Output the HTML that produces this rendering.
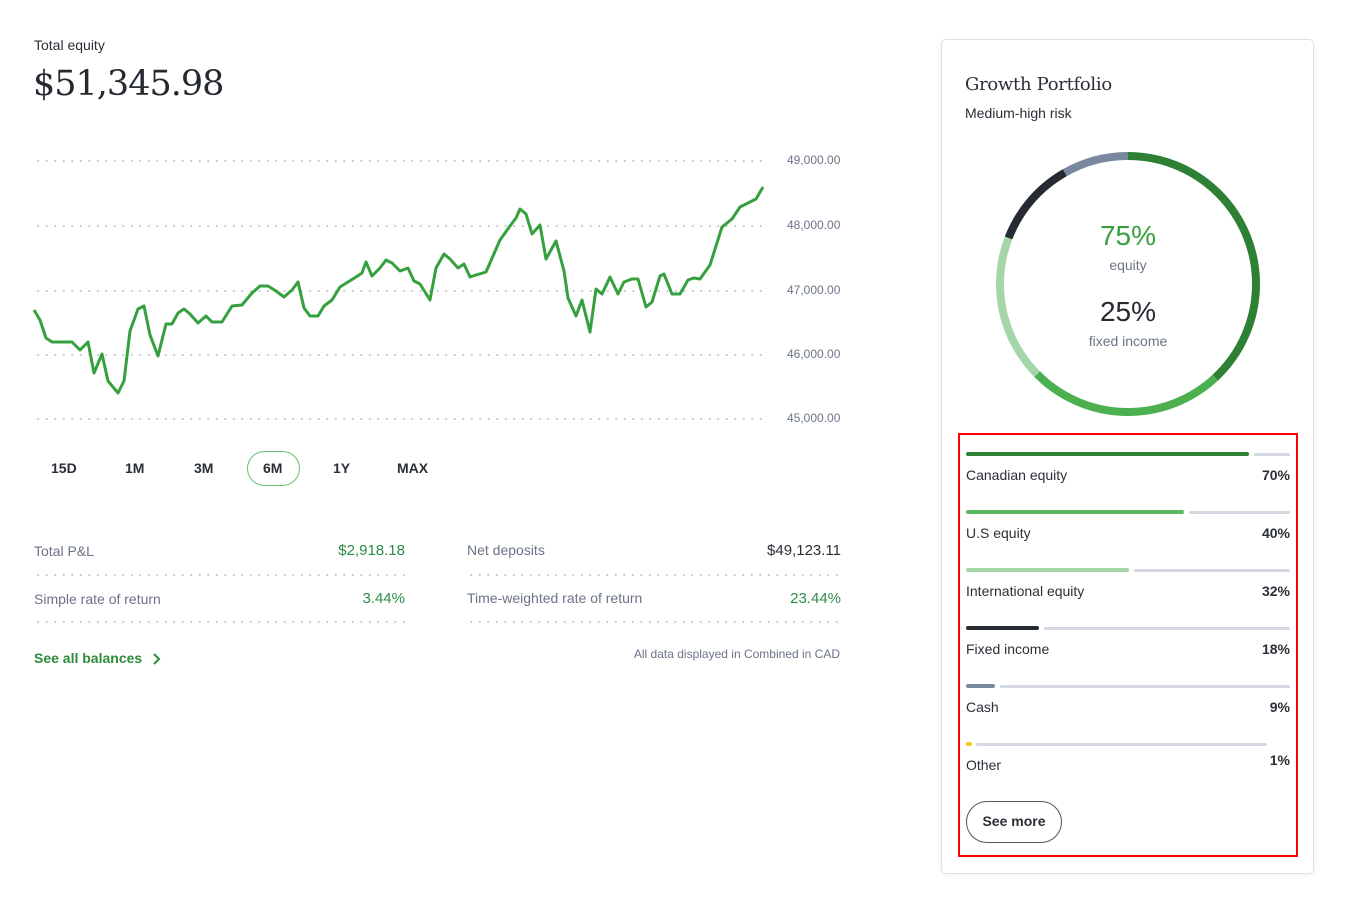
<!DOCTYPE html>
<html><head><meta charset="utf-8"><style>
*{margin:0;padding:0;box-sizing:border-box}
body{width:1356px;height:898px;background:#fff;position:relative;font-family:"Liberation Sans",sans-serif;color:#2a2f36;overflow:hidden}
.a{position:absolute;white-space:nowrap}
.lbl{font-size:14px;color:#6b7486}
.dots{position:absolute;height:2px;background-image:radial-gradient(circle,#c5cad6 0.9px,transparent 1.2px);background-size:8.5px 2px;background-repeat:repeat-x}
.ax{font-size:12px;color:#6b7486}
.tab{position:absolute;font-size:14px;font-weight:bold;color:#2a2f36;top:460px}
.bar{position:absolute;height:4px;border-radius:2px}
.g{background:#d3d8e2}
.bl{position:absolute;left:966px;font-size:14px;color:#2a2f36}
.bp{position:absolute;right:66px;font-size:14px;font-weight:bold;color:#2a2f36}
</style></head><body>
<div class="a" style="left:34px;top:37px;font-size:14px;color:#2a2f36">Total equity</div>
<div class="a" style="left:33px;top:64px;font-size:35px;font-family:'DejaVu Serif',serif;color:#252a31;letter-spacing:-1px">$51,345.98</div>

<div class="dots" style="left:34px;top:160px;width:732px"></div>
<div class="dots" style="left:34px;top:225px;width:732px"></div>
<div class="dots" style="left:34px;top:290px;width:732px"></div>
<div class="dots" style="left:34px;top:354px;width:732px"></div>
<div class="dots" style="left:34px;top:418px;width:732px"></div>
<div class="a ax" style="left:787px;top:153px">49,000.00</div>
<div class="a ax" style="left:787px;top:218px">48,000.00</div>
<div class="a ax" style="left:787px;top:283px">47,000.00</div>
<div class="a ax" style="left:787px;top:347px">46,000.00</div>
<div class="a ax" style="left:787px;top:411px">45,000.00</div>
<svg class="a" style="left:0;top:0" width="800" height="440"><polyline fill="none" stroke="#36a03f" stroke-width="3" stroke-linejoin="round" points="34,310 40,320 46,338 52,342 72,342 80,350 88,342 94,373 102,354 108,381 118,393 124,381 130,331 138,309 144,306 150,335 158,356 166,324 172,324 178,313 184,309 190,314 198,323 206,316 212,322 222,322 232,306 242,305 252,293 260,286 268,286 276,291 284,297 292,290 298,282 304,308 310,316 318,316 324,306 332,300 340,287 348,282 356,277 362,273 366,262 372,276 380,268 386,260 392,263 400,271 408,268 414,281 420,284 430,300 436,268 444,254 450,259 458,268 464,264 470,277 476,275 486,272 500,240 510,226 516,218 520,209 526,214 532,234 540,225 546,259 556,241 564,271 568,298 576,316 582,300 590,332 596,289 602,294 610,277 618,294 624,282 632,279 638,279 646,307 652,302 660,276 664,274 672,294 680,294 688,280 694,278 700,279 710,265 722,227 732,219 740,207 748,203 756,199 763,187"/></svg>

<div class="tab" style="left:51px">15D</div>
<div class="tab" style="left:125px">1M</div>
<div class="tab" style="left:194px">3M</div>
<div class="a" style="left:247px;top:451px;width:53px;height:35px;border:1.5px solid #6cc070;border-radius:18px"></div>
<div class="tab" style="left:263px">6M</div>
<div class="tab" style="left:333px">1Y</div>
<div class="tab" style="left:397px">MAX</div>

<div class="a lbl" style="left:34px;top:543px">Total P&amp;L</div>
<div class="a" style="right:951px;top:542px;font-size:15px;color:#2e8b4a">$2,918.18</div>
<div class="dots" style="left:34px;top:574px;width:372px"></div>
<div class="a lbl" style="left:34px;top:591px">Simple rate of return</div>
<div class="a" style="right:951px;top:590px;font-size:15px;color:#2e8b4a">3.44%</div>
<div class="dots" style="left:34px;top:621px;width:372px"></div>
<div class="a" style="left:34px;top:650px;font-size:14px;font-weight:bold;color:#2e8b3a">See all balances</div>
<svg class="a" style="left:152px;top:652px" width="10" height="14"><path d="M2 2l5 5-5 5" fill="none" stroke="#2e8b3a" stroke-width="2"/></svg>

<div class="a lbl" style="left:467px;top:542px">Net deposits</div>
<div class="a" style="right:515px;top:542px;font-size:15px;color:#2a2f36">$49,123.11</div>
<div class="dots" style="left:467px;top:574px;width:374px"></div>
<div class="a lbl" style="left:467px;top:590px">Time-weighted rate of return</div>
<div class="a" style="right:515px;top:590px;font-size:15px;color:#2e8b4a">23.44%</div>
<div class="dots" style="left:467px;top:621px;width:374px"></div>
<div class="a" style="right:516px;top:647px;font-size:12px;color:#6b7486">All data displayed in Combined in CAD</div>

<div class="a" style="left:941px;top:39px;width:373px;height:835px;border:1px solid #dde1e7;border-radius:5px;box-shadow:0 1px 4px rgba(0,0,0,0.08)"></div>
<div class="a" style="left:965px;top:74px;font-size:18px;font-family:'DejaVu Serif',serif;color:#2a2f36;letter-spacing:-0.3px">Growth Portfolio</div>
<div class="a" style="left:965px;top:105px;font-size:14px;color:#2a2f36">Medium-high risk</div>
<svg class="a" style="left:996px;top:152px" width="264" height="264" viewBox="0 0 264 264">
<g transform="rotate(-90 132 132)" fill="none" stroke-width="8">
<circle cx="132" cy="132" r="128" stroke="#2e8034" stroke-dasharray="306 1000" stroke-dashoffset="0"/>
<circle cx="132" cy="132" r="128" stroke="#4caf50" stroke-dasharray="197 1000" stroke-dashoffset="-306"/>
<circle cx="132" cy="132" r="128" stroke="#a5d6a7" stroke-dasharray="147 1000" stroke-dashoffset="-503"/>
<circle cx="132" cy="132" r="128" stroke="#262b32" stroke-dasharray="88 1000" stroke-dashoffset="-650"/>
<circle cx="132" cy="132" r="128" stroke="#7a889f" stroke-dasharray="66 1000" stroke-dashoffset="-738"/>
</g></svg>
<div class="a" style="left:1028px;width:200px;text-align:center;top:220px;font-size:28px;color:#36a03f">75%</div>
<div class="a" style="left:1028px;width:200px;text-align:center;top:257px;font-size:14px;color:#6b7486">equity</div>
<div class="a" style="left:1028px;width:200px;text-align:center;top:296px;font-size:28px;color:#252a31">25%</div>
<div class="a" style="left:1028px;width:200px;text-align:center;top:333px;font-size:14px;color:#6b7486">fixed income</div>

<div class="a" style="left:958px;top:433px;width:340px;height:424px;border:2px solid #f00"></div>
<div class="bar" style="left:966px;top:452px;width:283px;background:#2e8034"></div><div class="bar g" style="left:1254px;top:453px;width:36px;height:3px"></div>
<div class="bl" style="top:467px">Canadian equity</div><div class="bp" style="top:467px">70%</div>
<div class="bar" style="left:966px;top:510px;width:218px;background:#5cb860"></div><div class="bar g" style="left:1189px;top:511px;width:101px;height:3px"></div>
<div class="bl" style="top:525px">U.S equity</div><div class="bp" style="top:525px">40%</div>
<div class="bar" style="left:966px;top:568px;width:163px;background:#a5d6a7"></div><div class="bar g" style="left:1134px;top:569px;width:156px;height:3px"></div>
<div class="bl" style="top:583px">International equity</div><div class="bp" style="top:583px">32%</div>
<div class="bar" style="left:966px;top:626px;width:73px;background:#262b32"></div><div class="bar g" style="left:1044px;top:627px;width:246px;height:3px"></div>
<div class="bl" style="top:641px">Fixed income</div><div class="bp" style="top:641px">18%</div>
<div class="bar" style="left:966px;top:684px;width:29px;background:#7a889f"></div><div class="bar g" style="left:1000px;top:685px;width:290px;height:3px"></div>
<div class="bl" style="top:699px">Cash</div><div class="bp" style="top:699px">9%</div>
<div class="bar" style="left:966px;top:742px;width:6px;background:#f5c518"></div><div class="bar g" style="left:976px;top:743px;width:291px;height:3px"></div>
<div class="bl" style="top:757px">Other</div><div class="bp" style="top:752px">1%</div>
<div class="a" style="left:966px;top:801px;width:96px;height:42px;border:1.5px solid #555;border-radius:21px;font-size:14px;font-weight:bold;text-align:center;line-height:39px;color:#2a2f36">See more</div>
</body></html>
